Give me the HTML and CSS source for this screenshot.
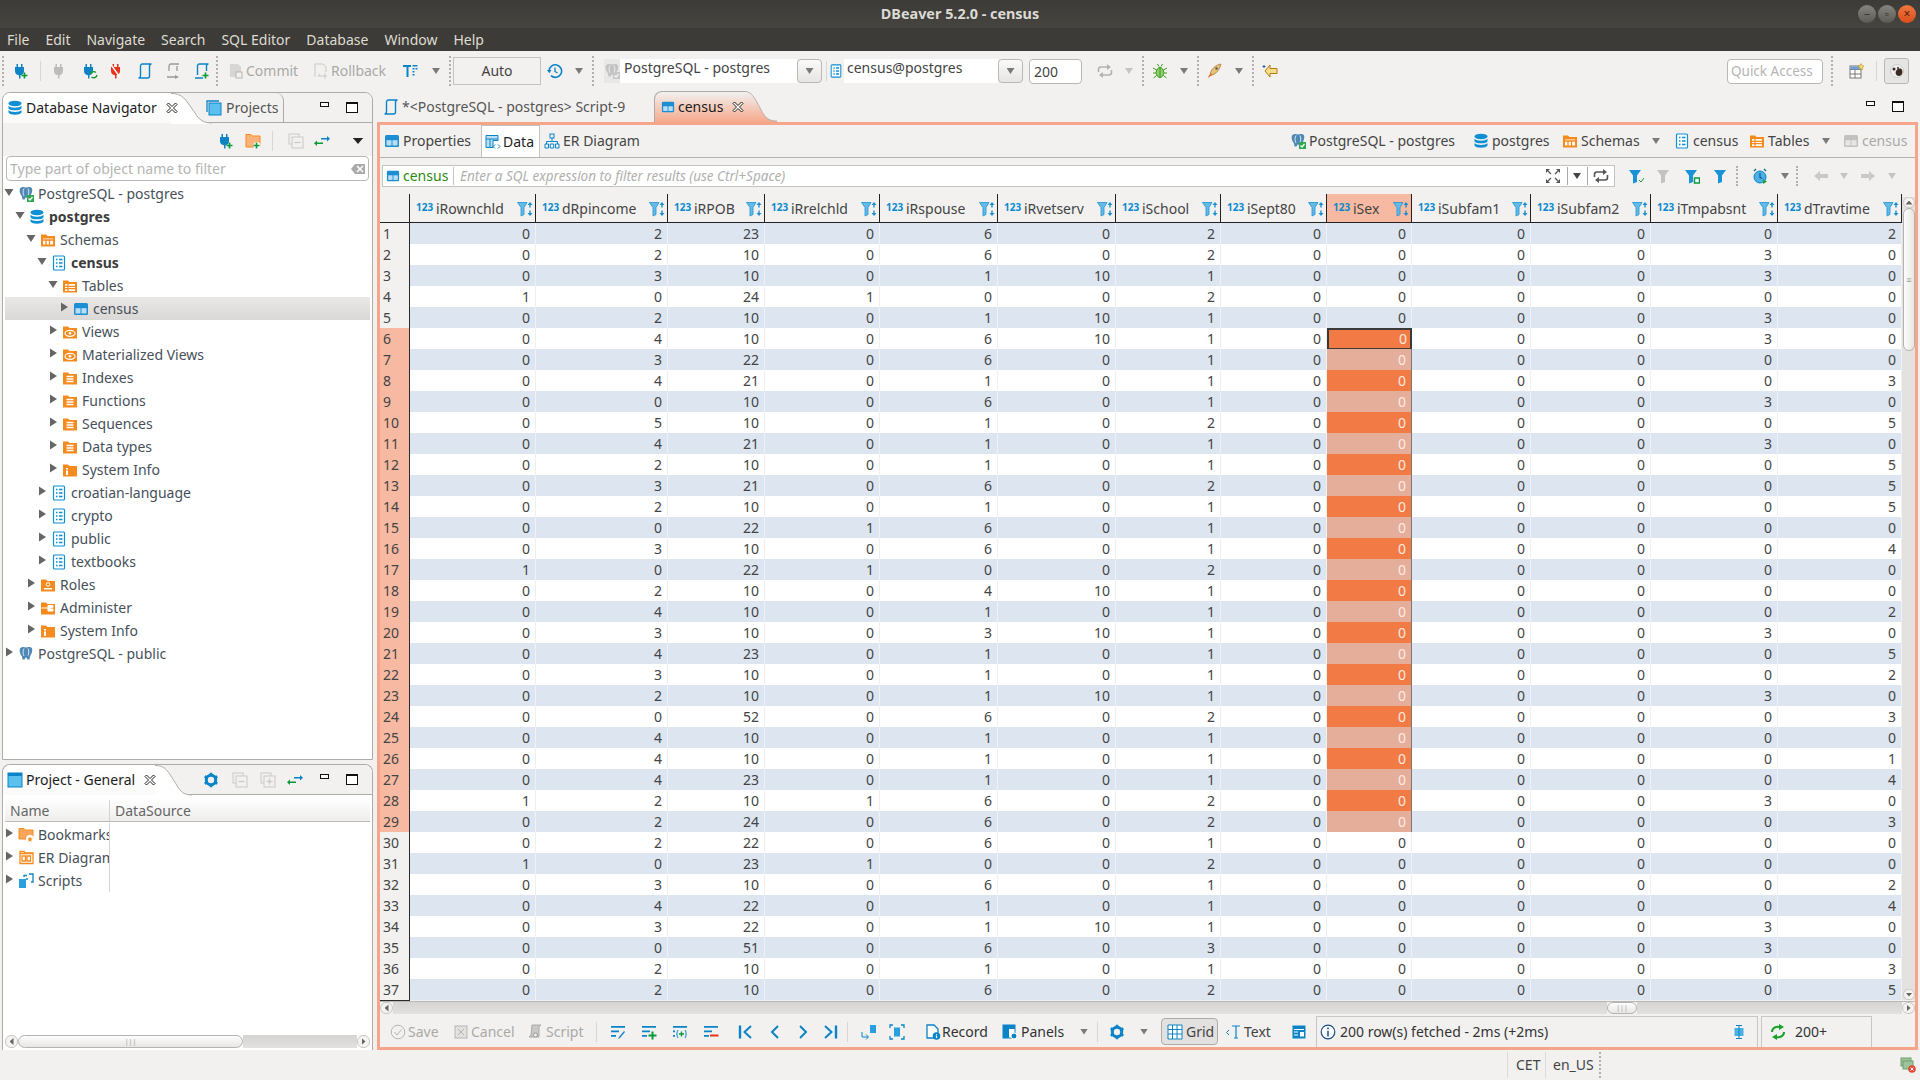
FILE: index.html
```html
<!DOCTYPE html>
<html lang="en">
<head>
<meta charset="utf-8">
<title>DBeaver 5.2.0 - census</title>
<link rel="stylesheet" href="styles.css">
</head>
<body>
<svg class="defs" aria-hidden="true">
<symbol id="plug" viewBox="0 0 16 16"><path fill="#0a84c6" d="M3.500 1H5v3h3V1h1.500v3H11v4a4.500 4.500 0 0 1-3.500 4.300V15.500h-1.500v-3.200A4.500 4.500 0 0 1 2 8V4h1.500z"/></symbol>
<symbol id="plus" viewBox="0 0 16 16"><path d="M11.500 9.500v6M8.500 12.500h6" stroke="#0a9a3a" stroke-width="1.700" fill="none"/></symbol>
<symbol id="reload" viewBox="0 0 16 16"><path d="M8.500 11a3.400 3.400 0 0 1 5.500-1.500M15 12a3.400 3.400 0 0 1-5.500 2" stroke="#1a9a2a" fill="none" stroke-width="1.400"/></symbol>
<symbol id="unplug" viewBox="0 0 16 16"><path fill="#e8321a" d="M4.500 1H6v3h3V1h1.500v3H12v4a4.500 4.500 0 0 1-3.500 4.300V15.500H7v-3.200A4.500 4.500 0 0 1 3 8V4h1.500z"/><path d="M2.500 1l10 14" stroke="#fff" stroke-width="1.400"/></symbol>
<symbol id="script" viewBox="0 0 16 16"><path d="M3.500 12.500V3.500c0-1.500.7-2.500 2-2.500h9c-1.500 0-2 1-2 2.500v9.500c0 1-.7 2-2 2h-9c1 0 2-.8 2-2.500z" fill="none" stroke="#0a84c6" stroke-width="1.400"/></symbol>
<symbol id="scriptarrow" viewBox="0 0 16 16"><path d="M4 8V3.500c0-1.500.7-2.500 2-2.500h8M12 3v5M2 14h8" fill="none" stroke="#999" stroke-width="1.300"/><path d="M10 12l4 2-4 2z" fill="#999"/></symbol>
<symbol id="scriptadd" viewBox="0 0 16 16"><path d="M3.500 12V3c0-1 .7-2 2-2h9c-1.500 0-2 1-2 2v5M1 15h8" fill="none" stroke="#0a84c6" stroke-width="1.400"/></symbol>
<symbol id="table" viewBox="0 0 16 16"><rect x="1" y="2" width="14" height="12" rx="1.500" fill="#1b8fd2"/><rect x="2.500" y="7.200" width="5" height="5.300" fill="#b9def5"/><rect x="8.500" y="7.200" width="5" height="5.300" fill="#b9def5"/></symbol>
<symbol id="schema" viewBox="0 0 16 16"><rect x="2.500" y="1" width="11" height="14" rx="1" fill="#fff" stroke="#0f8fd4" stroke-width="1.200"/><path d="M5 4.500h1.500M8 4.500h3.500M5 8h1.500M8 8h3.500M5 11.500h1.500M8 11.500h3.500" stroke="#0f8fd4" stroke-width="1.600"/></symbol>
<symbol id="db" viewBox="0 0 16 16"><g fill="#0f8fd4"><ellipse cx="8" cy="3.500" rx="6.500" ry="2.700"/><path d="M1.500 5.800c1.500 2.500 11.500 2.500 13 0v2.600c-1.500 2.500-11.500 2.500-13 0zM1.500 10c1.500 2.500 11.500 2.500 13 0v2.400c-1.500 3-11.500 3-13 0z"/></g></symbol>
<symbol id="folder" viewBox="0 0 16 16"><path d="M1 2.500h5L7.500 4H15v10.500H1z" fill="#f58b1f"/></symbol>
<symbol id="fschemas" viewBox="0 0 16 16"><use href="#folder"/><path d="M3 6.500h10v6H3z" fill="#fff"/><path d="M3 8h10M6 8v5M9.500 8v5" stroke="#f58b1f" stroke-width="1.300"/></symbol>
<symbol id="ftables" viewBox="0 0 16 16"><use href="#folder"/><path d="M3 6h10v7H3z" fill="#fff"/><path d="M3 8.300h10M3 10.700h10M6 6v7" stroke="#f58b1f" stroke-width="1.200"/></symbol>
<symbol id="fviews" viewBox="0 0 16 16"><use href="#folder"/><ellipse cx="8" cy="9.300" rx="5" ry="3" fill="none" stroke="#fff" stroke-width="1.200"/><circle cx="8" cy="9.300" r="1.300" fill="#fff"/></symbol>
<symbol id="fdb" viewBox="0 0 16 16"><use href="#folder"/><path d="M4.500 6.500h7M4.500 9h7M4.500 11.500h7" stroke="#fff" stroke-width="1.500"/></symbol>
<symbol id="finfo" viewBox="0 0 16 16"><use href="#folder"/><path d="M4 6h2v1.500H4zM4 8.500h2V13H4z" fill="#fff"/></symbol>
<symbol id="froles" viewBox="0 0 16 16"><use href="#folder"/><circle cx="8" cy="7.500" r="1.800" fill="none" stroke="#fff"/><path d="M4 12.500h8v-1.500H4z" fill="#fff"/></symbol>
<symbol id="fadmin" viewBox="0 0 16 16"><use href="#folder"/><path d="M1.500 8h7M8 5.500h5v2H10v1.500h3v2H8z" fill="#fff" stroke="#fff"/></symbol>
<symbol id="fbook" viewBox="0 0 16 16"><path d="M1 1.500h5L7.500 3H15v9H1z" fill="#f9a55a" stroke="#f58b1f"/><circle cx="12" cy="12" r="4" fill="#fff"/><path d="M12 9.500l.8 1.800 1.900.2-1.400 1.300.4 1.900-1.700-1-1.700 1 .4-1.900-1.400-1.300 1.900-.2z" fill="#f58b1f"/></symbol>
<symbol id="fer" viewBox="0 0 16 16"><path d="M2 1.500h4L7.500 3H15v10.500H2z" fill="none" stroke="#f58b1f" stroke-width="1.300"/><path d="M2 3.500h13" stroke="#f58b1f" stroke-width="1.500"/><path d="M4 6h3.500v5H4zM9 6h3.500v5H9z" fill="none" stroke="#f58b1f" stroke-width="1.300"/></symbol>
<symbol id="scripts" viewBox="0 0 16 16"><rect x="1" y="6" width="7" height="9" fill="#2a9fe0"/><path d="M6 4V2.500h3M11 1h4v8h-2M8 6h2" fill="none" stroke="#0a84c6" stroke-width="1.300"/></symbol>
<symbol id="pg" viewBox="0 0 16 16"><path d="M2 2.500C4 .5 6 .8 8 1.500c2-.9 5-1 6 1 1 3-1 6-2 8l-.5 3H9.500L8 11l-1.500 2.500h-2l-.5-3C2 8 1 5 2 2.500z" fill="#4f87b5"/><path d="M6 2.500C4.500 5 5 8 6 10M10 2.500c1 2 1 5 0 7" stroke="#fff" stroke-width=".8" fill="none"/></symbol>
<symbol id="badge" viewBox="0 0 16 16"><rect x="9" y="9" width="7" height="7" fill="#2fa84f"/><path d="M10.500 12.500l1.500 1.500 2.500-3" stroke="#fff" stroke-width="1.200" fill="none"/></symbol>
<symbol id="win" viewBox="0 0 16 16"><rect x="3" y="3" width="12" height="12" fill="#5cc0ee" stroke="#0a84c6"/><path d="M1 12V1h12" fill="none" stroke="#0a84c6" stroke-width="1.300"/></symbol>
<symbol id="winp" viewBox="0 0 16 16"><rect x="1" y="1" width="14" height="14" fill="#5cc0ee" stroke="#0a84c6"/><rect x="1" y="1" width="14" height="3" fill="#0a84c6"/></symbol>
<symbol id="fl" viewBox="0 0 16 16"><path d="M1 2h12L9 7.500v6.500l-4 1.500v-8z" fill="#1a93d6"/></symbol>
<symbol id="hfl" viewBox="0 0 16 16"><path d="M.5 1.500h9.500L7 6.500v7l-3 1.500v-8.500z" fill="#66bbe6" stroke="#1a93d6" stroke-width=".8"/><path d="M13 1l-2.500 3h1.800v2.500h1.400V4h1.800zM13 15l-2.500-3h1.800V9.500h1.400V12h1.800z" fill="#1a8fd0"/></symbol>
<symbol id="tcols" viewBox="0 0 16 16"><path d="M1 2h8v2H6.500v10h-2V4H1zM10.500 2h5v1.500h-5zM10.500 5h2v1.500h-2zM10.500 8h2v1.500h-2zM10.500 11h2v1.500h-2zM13.500 5h2v1.500h-2z" fill="#0a84c6"/></symbol>
<symbol id="hist" viewBox="0 0 16 16"><path d="M2 8a6.300 6.300 0 1 1 2 4.700" fill="none" stroke="#0a84c6" stroke-width="1.600"/><path d="M0 7h4.500L2.300 10.300z" fill="#0a84c6"/><path d="M8 4.500V8.500l2.500 1.500" fill="none" stroke="#0a84c6" stroke-width="1.300"/></symbol>
<symbol id="bug" viewBox="0 0 16 16"><ellipse cx="8" cy="9.500" rx="3.800" ry="5" fill="#8fce6a" stroke="#3a9a20"/><path d="M8 4.500v10M1 5l3.500 2M15 5l-3.500 2M1 10h3M15 10h-3M1.500 15l3-2.500M14.500 15l-3-2.500M5.500 1l1.500 2.500M10.500 1L9 3.500" stroke="#3a9a20" fill="none"/></symbol>
<symbol id="rocket" viewBox="0 0 16 16"><path d="M15 1C10 2 6 5 4.500 10l2 2C11 10 14 6 15 1z" fill="#e9c27a" stroke="#a97c32" stroke-width=".8"/><path d="M4.500 10l-3 5 5-3z" fill="#e06b2b"/><circle cx="10.500" cy="5.500" r="1.200" fill="#555"/></symbol>
<symbol id="back" viewBox="0 0 16 16"><path d="M15 5.500H8V2L3 8l5 6v-3.500h7z" fill="#f8dd8a" stroke="#b07d12"/><path d="M2 2v3M.5 3.500h3" stroke="#2a5fb0"/></symbol>
<symbol id="persp" viewBox="0 0 16 16"><rect x="1" y="3" width="11" height="12" fill="#fff" stroke="#777"/><path d="M1 6.500h11M6 6.500V15M1 11h11" stroke="#777" fill="none"/><rect x="1.500" y="3.500" width="10" height="3" fill="#6f9fd8"/><path d="M12 .5l1 2 2 .5-1.500 1.500.3 2-1.800-1-1.800 1 .3-2L9 3l2-.5z" fill="#f8d76a" stroke="#b98a12" stroke-width=".5"/></symbol>
<symbol id="beaver" viewBox="0 0 16 16"><circle cx="8" cy="8" r="6.500" fill="#eee" stroke="#ccc"/><path d="M7 8c2-3 5-3 6-1s0 6-3 6-4-3-3-5z" fill="#3a2a22"/><circle cx="5" cy="6" r="1.500" fill="#3a2a22"/><circle cx="9" cy="5" r="1" fill="#3a2a22"/></symbol>
<symbol id="close" viewBox="0 0 12 12"><path d="M2.500 1L6 4.500 9.500 1 11 2.500 7.500 6 11 9.500 9.500 11 6 7.500 2.500 11 1 9.500 4.500 6 1 2.500z" fill="#fff" stroke="#222" stroke-width="1"/></symbol>
<symbol id="gear" viewBox="0 0 16 16"><circle cx="8" cy="8" r="4.700" fill="none" stroke="#0a84c6" stroke-width="3"/><path d="M8 .8v3M8 12.200v3M1.700 4.400l2.600 1.500M11.700 10.100l2.600 1.500M1.700 11.600l2.600-1.500M11.700 5.900l2.600-1.500" stroke="#0a84c6" stroke-width="2.600"/></symbol>
<symbol id="collapse" viewBox="0 0 16 16"><rect x="1" y="1" width="10" height="10" fill="none" stroke="#c9c9c7"/><rect x="4" y="4" width="11" height="11" fill="#f2f1f0" stroke="#c9c9c7"/><path d="M6.500 9.500h6" stroke="#c9c9c7" stroke-width="1.300"/></symbol>
<symbol id="expand" viewBox="0 0 16 16"><use href="#collapse"/><path d="M9.500 6.500v6" stroke="#c9c9c7" stroke-width="1.300"/></symbol>
<symbol id="link" viewBox="0 0 16 16"><path d="M7 5h6V3l3 2.800-3 2.700V6.600H7z" fill="#0a84c6"/><path d="M9 9.400H3V7.500L0 10.300 3 13v-2h6z" fill="#0a9a3a"/></symbol>
<symbol id="folderadd" viewBox="0 0 16 16"><path d="M1 1.500h5L7.500 3H15v11H1z" fill="#fbb27a" stroke="#f58b1f"/><circle cx="12" cy="12.500" r="3.500" fill="#fff"/><use href="#plus"/></symbol>
<symbol id="edb" viewBox="0 0 16 16"><rect x="6" y="1" width="4" height="4" fill="none" stroke="#0a84c6"/><path d="M8 5v3M2.500 11V8.500h11V11" fill="none" stroke="#0a84c6"/><path d="M1 11h3.500v4H1zM6.200 11h3.500v4H6.200zM11.500 11H15v4h-3.500z" fill="none" stroke="#0a84c6"/></symbol>
<symbol id="data" viewBox="0 0 16 16"><path d="M1 1.500h12v5h-5v7H1z" fill="#b9def5" stroke="#0a84c6"/><path d="M1 5h12M5 5v8" stroke="#0a84c6"/><path d="M10 10.500l-2 2 2 2M13 10.500l2 2-2 2" fill="none" stroke="#0a84c6"/></symbol>
<symbol id="expandarrows" viewBox="0 0 16 16"><path d="M1 1h4L1 5zM15 1h-4l4 4zM1 15h4l-4-4zM15 15h-4l4-4z" fill="#555"/><path d="M3 3l3 3M13 3l-3 3M3 13l3-3M13 13l-3-3" stroke="#555" stroke-width="1.200"/></symbol>
<symbol id="refresh" viewBox="0 0 16 16"><path d="M1.500 9V6.500c0-1.500 1-2.500 2.500-2.500h8M14.500 7v2.500c0 1.500-1 2.500-2.500 2.500H4" fill="none" stroke="#555" stroke-width="1.600"/><path d="M10 1l4 3-4 3zM6 9l-4 3 4 3z" fill="#555"/></symbol>
<symbol id="clock" viewBox="0 0 16 16"><circle cx="8" cy="9" r="6" fill="#4db0e4" stroke="#0a84c6"/><path d="M8 5v4.500l2.500 1M2 3l2-2M14 3l-2-2" stroke="#0a5f99" stroke-width="1.200" fill="none"/><path d="M11 11l4 2.500-4 2.500z" fill="#1aa33a"/></symbol>
<symbol id="larrow" viewBox="0 0 16 16"><path d="M1 8l6-5v3h8v4H7v3z" fill="#c9c9c7"/></symbol>
<symbol id="rarrow" viewBox="0 0 16 16"><path d="M15 8L9 3v3H1v4h8v3z" fill="#c9c9c7"/></symbol>
<symbol id="rowedit" viewBox="0 0 16 16"><path d="M1 2h14v1.800H1zM1 6.500h8v1.800H1zM1 11h5v1.800H1z" fill="#0a84c6"/><path d="M14 7l-5 6-1 2 2-1 5-6z" fill="#0a84c6"/></symbol>
<symbol id="rowadd" viewBox="0 0 16 16"><path d="M1 2h14v1.800H1zM1 6.500h8v1.800H1zM1 11h5v1.800H1z" fill="#0a84c6"/><path d="M11.500 7.500v8M7.500 11.500h8" stroke="#0a9a3a" stroke-width="2"/></symbol>
<symbol id="rowcopy" viewBox="0 0 16 16"><path d="M1 2h14v1.800H1zM1 6.500h2v1.800H1zM1 11h2v1.800H1z" fill="#0a84c6"/><path d="M6 6C4.500 8 4.500 12 6 14M13 6c1.500 2 1.500 6 0 8" stroke="#0a84c6" fill="none"/><path d="M9.500 7.500v5M7 10h5" stroke="#0a9a3a" stroke-width="1.400"/></symbol>
<symbol id="rowdel" viewBox="0 0 16 16"><path d="M1 2h14v1.800H1zM1 6.500h8v1.800H1zM1 11h5v1.800H1z" fill="#0a84c6"/><path d="M7 11.500h8.500" stroke="#e8321a" stroke-width="2"/></symbol>
<symbol id="first" viewBox="0 0 16 16"><path d="M2 1.500v13" stroke="#0a84c6" stroke-width="2.400"/><path d="M13 2L6.500 8l6.500 6" stroke="#0a84c6" stroke-width="2" fill="none"/></symbol>
<symbol id="prev" viewBox="0 0 16 16"><path d="M11 2L5 8l6 6" stroke="#0a84c6" stroke-width="2" fill="none"/></symbol>
<symbol id="next" viewBox="0 0 16 16"><path d="M5 2l6 6-6 6" stroke="#0a84c6" stroke-width="2" fill="none"/></symbol>
<symbol id="last" viewBox="0 0 16 16"><path d="M14 1.500v13" stroke="#0a84c6" stroke-width="2.400"/><path d="M3 2l6.500 6L3 14" stroke="#0a84c6" stroke-width="2" fill="none"/></symbol>
<symbol id="tolink" viewBox="0 0 16 16"><rect x="9" y="1" width="6" height="8" fill="#2a9fe0"/><path d="M1 8v5h6M5 10.500L7.500 13 5 15.500" stroke="#0a84c6" fill="none"/></symbol>
<symbol id="focus" viewBox="0 0 16 16"><path d="M1 4V1h3M12 1h3v3M15 12v3h-3M4 15H1v-3" stroke="#0a84c6" fill="none" stroke-width="1.300"/><rect x="5" y="3.500" width="6" height="9" fill="#2a9fe0"/></symbol>
<symbol id="record" viewBox="0 0 16 16"><path d="M2 1h7l4 4v9H2z" fill="#fff" stroke="#0a84c6" stroke-width="1.300"/><circle cx="11.500" cy="12" r="3.800" fill="#0a84c6"/><path d="M11.500 10v.8M11.500 11.500V14" stroke="#fff" stroke-width="1.200"/></symbol>
<symbol id="panels" viewBox="0 0 16 16"><rect x="1" y="1" width="12" height="13" fill="#fff" stroke="#0a84c6"/><rect x="1" y="1" width="12" height="4" fill="#0a84c6"/><rect x="1" y="5" width="6" height="9" fill="#0a84c6"/><circle cx="12" cy="12" r="3" fill="#0a84c6" stroke="#fff"/></symbol>
<symbol id="grid" viewBox="0 0 16 16"><path d="M1 1h14v14H1zM1 5.500h14M1 10h14M5.500 1v14M10 1v14" fill="#fff" stroke="#0a84c6"/></symbol>
<symbol id="texti" viewBox="0 0 16 16"><path d="M7 2h8M11 2v12M9 14h4" fill="none" stroke="#0a84c6" stroke-width="1.200"/><path d="M4 6L1.500 8.500 4 11" fill="none" stroke="#0a84c6"/></symbol>
<symbol id="form" viewBox="0 0 16 16"><rect x="1.500" y="1.500" width="13" height="13" fill="#0a84c6"/><path d="M3 5.500h10M3 8h4M3 11h4" stroke="#fff"/><path d="M9 8h4v4.500H9z" fill="#fff"/></symbol>
<symbol id="info" viewBox="0 0 16 16"><circle cx="8" cy="8" r="6.800" fill="#fff" stroke="#17508a" stroke-width="1.200"/><path d="M8 3.500v1.800M8 6.700V12.500" stroke="#17508a" stroke-width="1.500"/></symbol>
<symbol id="resize" viewBox="0 0 16 16"><rect x="3.500" y="4" width="9" height="8" fill="#4db0e4"/><path d="M5 1.500h6M8 1.500v13M5 14.500h6" stroke="#0a84c6" fill="none"/></symbol>
<symbol id="cycle" viewBox="0 0 16 16"><path d="M2 8c0-4 4-6 8-5M14 8c0 4-4 6-8 5" stroke="#17a02a" stroke-width="2" fill="none"/><path d="M9 0l5 3-5 3zM7 10l-5 3 5 3z" fill="#17a02a"/></symbol>
<symbol id="save" viewBox="0 0 16 16"><circle cx="8" cy="8" r="6.800" fill="none" stroke="#b5b5b3"/><path d="M4.500 8l2.500 3 4.500-5.500" stroke="#b5b5b3" fill="none"/></symbol>
<symbol id="cancel" viewBox="0 0 16 16"><rect x="2" y="2" width="12" height="12" fill="#e2e1e0" stroke="#b5b5b3"/><path d="M5 5l6 6M11 5l-6 6" stroke="#b5b5b3"/></symbol>
<symbol id="scriptgray" viewBox="0 0 16 16"><path d="M5 1h9l-2 2v10H2l2-2z" fill="#c8c8c6" stroke="#a9a9a7"/><circle cx="8.500" cy="11" r="2" fill="#f2f1f0" stroke="#999"/></symbol>
<symbol id="commit" viewBox="0 0 16 16"><path d="M2 1h8l3 3v10H2z" fill="#d7d6d5"/><rect x="8" y="9" width="6" height="6" fill="#f2f1f0" stroke="#b5b5b3"/></symbol>
<symbol id="rollback" viewBox="0 0 16 16"><path d="M2 14V1h8l3 3v5" fill="none" stroke="#c9c9c7"/><path d="M5 13h9M12 10v6M5 13l2-2" stroke="#c9c9c7" fill="none"/></symbol>
<symbol id="notif" viewBox="0 0 16 16"><rect x="1" y="1" width="10" height="8" fill="#9dc59b" stroke="#6f9f6f"/><rect x="3" y="4" width="10" height="8" fill="#9dc59b" stroke="#6f9f6f"/><circle cx="12" cy="12" r="3.800" fill="#e0483a"/><path d="M10.500 10.500l3 3M13.500 10.500l-3 3" stroke="#fff"/></symbol>
</svg>

<header class="titlebar">
  <span class="title">DBeaver 5.2.0 - census</span>
  <div class="winbtns"><span class="wb">–</span><span class="wb">▫</span><span class="wb wb-close">×</span></div>
</header>
<nav class="menubar">
  <span>File</span><span>Edit</span><span>Navigate</span><span>Search</span><span>SQL Editor</span><span>Database</span><span>Window</span><span>Help</span>
</nav>

<div class="toolbar">
  <i class="grip"></i>
  <svg class="ic m8"><use href="#plug"/><use href="#plus"/></svg>
  <i class="sep m11"></i>
  <svg class="ic m11 dis"><use href="#plug"/></svg>
  <svg class="ic m14"><use href="#plug"/><use href="#reload"/></svg>
  <svg class="ic m10"><use href="#unplug"/></svg>
  <svg class="ic m13"><use href="#script"/></svg>
  <svg class="ic m12"><use href="#scriptarrow"/></svg>
  <svg class="ic m13"><use href="#scriptadd"/><use href="#plus"/></svg>
  <i class="grip m6"></i>
  <span class="tb off m9 b-commit"><svg class="ic"><use href="#commit"/></svg>Commit</span>
  <span class="tb off m13 b-rollback"><svg class="ic"><use href="#rollback"/></svg>Rollback</span>
  <svg class="ic m13"><use href="#tcols"/></svg>
  <i class="drop m14"></i>
  <i class="grip m9"></i>
  <span class="autobox m1">Auto</span>
  <svg class="ic m6"><use href="#hist"/></svg>
  <i class="drop m12"></i>
  <i class="grip m9"></i>
  <div class="combo combo-ds m9">
    <svg class="ic comboicon dis"><use href="#pg"/><use href="#badge"/></svg>
    <span class="comboval">PostgreSQL - postgres</span><span class="combobtn"><i class="drop"></i></span>
  </div>
  <i class="sep m4"></i>
  <svg class="ic ic14 m2"><use href="#schema"/></svg>
  <div class="combo combo-sc m1">
    <span class="comboval cv2">census@postgres</span><span class="combobtn"><i class="drop"></i></span>
  </div>
  <span class="limit m6">200</span>
  <svg class="ic m15 dis"><use href="#refresh"/></svg>
  <i class="drop m12 pale"></i>
  <i class="grip m9"></i>
  <svg class="ic m7"><use href="#bug"/></svg>
  <i class="drop m12"></i>
  <i class="grip m9"></i>
  <svg class="ic m6"><use href="#rocket"/></svg>
  <i class="drop m13"></i>
  <i class="grip m9"></i>
  <svg class="ic m7"><use href="#back"/></svg>
  <span class="quick">Quick Access</span>
  <i class="grip m8"></i>
  <svg class="ic m15"><use href="#persp"/></svg>
  <i class="sep m11"></i>
  <span class="perspbtn m7"><svg class="ic"><use href="#beaver"/></svg></span>
</div>

<main class="work">
  <div class="leftcol">
    <section class="frame nav">
      <div class="tabstrip">
        <div class="tabon tab-nav"><svg class="ic"><use href="#db"/></svg><span class="tabtxt">Database Navigator</span><svg class="x"><use href="#close"/></svg></div>
        <svg class="curve" viewBox="0 0 41 31" preserveAspectRatio="none"><path d="M0 0C12 0 14 6 24 20 28 27 33 30 41 30V31H0z" fill="#fff"/><path d="M0 .5C12 .5 14 6 24 20 28 27 33 30 41 30" fill="none" stroke="#aeaca8"/></svg>
        <div class="taboff tab-proj"><svg class="ic"><use href="#win"/></svg><span>Projects</span></div>
        <div class="minmax"><i class="mini"></i><i class="maxi"></i></div>
      </div>
      <div class="viewbar">
        <svg class="ic"><use href="#plug"/><use href="#plus"/></svg>
        <svg class="ic m11"><use href="#folderadd"/></svg>
        <i class="sep m11"></i>
        <svg class="ic m15"><use href="#collapse"/></svg>
        <svg class="ic m10"><use href="#link"/></svg>
        <i class="viewmenu m23"></i>
      </div>
      <div class="treefilter"><span>Type part of object name to filter</span><svg class="ic clr"><path d="M1 8l4-5h10v10H5z" fill="#aaa"/><path d="M7 5l6 6M13 5l-6 6" stroke="#fff" stroke-width="1.500"/></svg></div>
      <div class="tree">
        <div class="tr l0"><i class="tw open"></i><svg class="ic"><use href="#pg"/><use href="#badge"/></svg><span>PostgreSQL - postgres</span></div>
        <div class="tr l1"><i class="tw open"></i><svg class="ic"><use href="#db"/></svg><span class="bold">postgres</span></div>
        <div class="tr l2"><i class="tw open"></i><svg class="ic"><use href="#fschemas"/></svg><span>Schemas</span></div>
        <div class="tr l3"><i class="tw open"></i><svg class="ic"><use href="#schema"/></svg><span class="bold">census</span></div>
        <div class="tr l4"><i class="tw open"></i><svg class="ic"><use href="#ftables"/></svg><span>Tables</span></div>
        <div class="tr l5 trsel"><i class="tw"></i><svg class="ic"><use href="#table"/></svg><span>census</span></div>
        <div class="tr l4"><i class="tw"></i><svg class="ic"><use href="#fviews"/></svg><span>Views</span></div>
        <div class="tr l4"><i class="tw"></i><svg class="ic"><use href="#fviews"/></svg><span>Materialized Views</span></div>
        <div class="tr l4"><i class="tw"></i><svg class="ic"><use href="#fdb"/></svg><span>Indexes</span></div>
        <div class="tr l4"><i class="tw"></i><svg class="ic"><use href="#fdb"/></svg><span>Functions</span></div>
        <div class="tr l4"><i class="tw"></i><svg class="ic"><use href="#fdb"/></svg><span>Sequences</span></div>
        <div class="tr l4"><i class="tw"></i><svg class="ic"><use href="#fdb"/></svg><span>Data types</span></div>
        <div class="tr l4"><i class="tw"></i><svg class="ic"><use href="#finfo"/></svg><span>System Info</span></div>
        <div class="tr l3"><i class="tw"></i><svg class="ic"><use href="#schema"/></svg><span>croatian-language</span></div>
        <div class="tr l3"><i class="tw"></i><svg class="ic"><use href="#schema"/></svg><span>crypto</span></div>
        <div class="tr l3"><i class="tw"></i><svg class="ic"><use href="#schema"/></svg><span>public</span></div>
        <div class="tr l3"><i class="tw"></i><svg class="ic"><use href="#schema"/></svg><span>textbooks</span></div>
        <div class="tr l2"><i class="tw"></i><svg class="ic"><use href="#froles"/></svg><span>Roles</span></div>
        <div class="tr l2"><i class="tw"></i><svg class="ic"><use href="#fadmin"/></svg><span>Administer</span></div>
        <div class="tr l2"><i class="tw"></i><svg class="ic"><use href="#finfo"/></svg><span>System Info</span></div>
        <div class="tr l0"><i class="tw"></i><svg class="ic"><use href="#pg"/></svg><span>PostgreSQL - public</span></div>
      </div>
    </section>
    <section class="frame proj">
      <div class="tabstrip">
        <div class="tabon tab-project"><svg class="ic"><use href="#winp"/></svg><span class="tabtxt">Project - General</span><svg class="x"><use href="#close"/></svg></div>
        <svg class="curve curve-p" viewBox="0 0 41 31" preserveAspectRatio="none"><path d="M0 0C12 0 14 6 24 20 28 27 33 30 41 30V31H0z" fill="#fff"/><path d="M0 .5C12 .5 14 6 24 20 28 27 33 30 41 30" fill="none" stroke="#aeaca8"/></svg>
        <svg class="ic m11"><use href="#gear"/></svg>
        <svg class="ic m13"><use href="#collapse"/></svg>
        <svg class="ic m12"><use href="#expand"/></svg>
        <svg class="ic m11"><use href="#link"/></svg>
        <div class="minmax"><i class="mini"></i><i class="maxi"></i></div>
      </div>
      <div class="pthead"><span class="ptname">Name</span><span class="ptds">DataSource</span></div>
      <div class="ptbody">
        <div class="tr l0 ptr"><i class="tw"></i><svg class="ic"><use href="#fbook"/></svg><span>Bookmarks</span></div>
        <div class="tr l0 ptr"><i class="tw"></i><svg class="ic"><use href="#fer"/></svg><span>ER Diagrams</span></div>
        <div class="tr l0 ptr"><i class="tw"></i><svg class="ic"><use href="#scripts"/></svg><span>Scripts</span></div>
      </div>
      <div class="hsb hsb-p"><span class="sbtn"><i class="al"></i></span><span class="thumb thumb-p"><b>|||</b></span><span class="sfill"></span><span class="sbtn"><i class="ar"></i></span></div>
    </section>
  </div>

  <div class="rightcol">
    <div class="edtabs">
      <div class="edtab-off"><svg class="ic"><use href="#script"/></svg><span>*&lt;PostgreSQL - postgres&gt; Script-9</span></div>
      <div class="edtab-on"><svg class="ic ic14"><use href="#table"/></svg><span class="tabtxt">census</span><svg class="x"><use href="#close"/></svg></div>
      <svg class="curve curve-e" viewBox="0 0 41 31" preserveAspectRatio="none"><defs><linearGradient id="sal" x1="0" y1="0" x2="0" y2="1"><stop offset="0" stop-color="#f2f1f0"/><stop offset="1" stop-color="#f6a98c"/></linearGradient></defs><path d="M0 0C8 0 12 6 20 18 26 28 32 30 41 30V31H0z" fill="url(#sal)"/><path d="M0 .5C8 .5 12 6 20 18 26 28 32 30 41 30" fill="none" stroke="#aeaca8"/></svg>
      <div class="minmax"><i class="mini"></i><i class="maxi"></i></div>
    </div>
    <section class="panel">
      <div class="subtabs">
        <span class="st st-prop"><svg class="ic"><use href="#table"/></svg>Properties</span>
        <span class="st st-data"><svg class="ic"><use href="#data"/></svg>Data</span>
        <span class="st st-er"><svg class="ic"><use href="#edb"/></svg>ER Diagram</span>
        <span class="st bc-pg"><svg class="ic"><use href="#pg"/><use href="#badge"/></svg>PostgreSQL - postgres</span>
        <span class="st bc-db m15"><svg class="ic"><use href="#db"/></svg>postgres</span>
        <span class="st bc-sc m13"><svg class="ic"><use href="#fschemas"/></svg>Schemas</span>
        <i class="drop m13"></i>
        <span class="st bc-ce m14"><svg class="ic"><use href="#schema"/></svg>census</span>
        <span class="st bc-ta m14"><svg class="ic"><use href="#ftables"/></svg>Tables</span>
        <i class="drop m13"></i>
        <span class="st bc-tb off m13"><svg class="ic dis"><use href="#table"/></svg>census</span>
      </div>
      <div class="filterbar">
        <div class="filterbox">
          <span class="fname"><svg class="ic ic14"><use href="#table"/></svg><span>census</span></span>
          <span class="fhint">Enter a SQL expression to filter results (use Ctrl+Space)</span>
          <svg class="ic fend"><use href="#expandarrows"/></svg>
          <i class="vsep m6"></i><i class="drop m5 dark"></i><i class="vsep m6"></i>
          <svg class="ic m5"><use href="#refresh"/></svg>
        </div>
        <svg class="ic m13"><use href="#fl"/><path d="M11 12l2 2 3-4" stroke="#1aa33a" fill="none"/></svg>
        <svg class="ic m12 dis"><use href="#fl"/></svg>
        <svg class="ic m12"><use href="#fl"/><rect x="10.500" y="10" width="5" height="5" fill="#fff" stroke="#0a9a3a" stroke-width="1.500"/></svg>
        <svg class="ic m13"><use href="#fl"/></svg>
        <i class="grip m7 shortg"></i>
        <svg class="ic m13"><use href="#clock"/></svg>
        <i class="drop m13"></i>
        <i class="grip m7 shortg"></i>
        <svg class="ic m14"><use href="#larrow"/></svg>
        <i class="drop m11 pale"></i>
        <svg class="ic m12"><use href="#rarrow"/></svg>
        <i class="drop m12 pale"></i>
      </div>
      <div class="gridwrap">
        <div class="grid">
          <div class="ghead">
            <span class="corner"></span>
            <span class="hc"><em>123</em><span class="hn">iRownchld</span><svg class="hic"><use href="#hfl"/></svg></span>
            <span class="hc"><em>123</em><span class="hn">dRpincome</span><svg class="hic"><use href="#hfl"/></svg></span>
            <span class="hc"><em>123</em><span class="hn">iRPOB</span><svg class="hic"><use href="#hfl"/></svg></span>
            <span class="hc"><em>123</em><span class="hn">iRrelchld</span><svg class="hic"><use href="#hfl"/></svg></span>
            <span class="hc"><em>123</em><span class="hn">iRspouse</span><svg class="hic"><use href="#hfl"/></svg></span>
            <span class="hc"><em>123</em><span class="hn">iRvetserv</span><svg class="hic"><use href="#hfl"/></svg></span>
            <span class="hc"><em>123</em><span class="hn">iSchool</span><svg class="hic"><use href="#hfl"/></svg></span>
            <span class="hc"><em>123</em><span class="hn">iSept80</span><svg class="hic"><use href="#hfl"/></svg></span>
            <span class="hc hsel"><em>123</em><span class="hn">iSex</span><svg class="hic"><use href="#hfl"/></svg></span>
            <span class="hc"><em>123</em><span class="hn">iSubfam1</span><svg class="hic"><use href="#hfl"/></svg></span>
            <span class="hc"><em>123</em><span class="hn">iSubfam2</span><svg class="hic"><use href="#hfl"/></svg></span>
            <span class="hc"><em>123</em><span class="hn">iTmpabsnt</span><svg class="hic"><use href="#hfl"/></svg></span>
            <span class="hc"><em>123</em><span class="hn">dTravtime</span><svg class="hic"><use href="#hfl"/></svg></span>
          </div>
          <div class="rows">
<div class="row"><b>1</b><s>0</s><s>2</s><s>23</s><s>0</s><s>6</s><s>0</s><s>2</s><s>0</s><s>0</s><s>0</s><s>0</s><s>0</s><s>2</s></div>
<div class="row"><b>2</b><s>0</s><s>2</s><s>10</s><s>0</s><s>6</s><s>0</s><s>2</s><s>0</s><s>0</s><s>0</s><s>0</s><s>3</s><s>0</s></div>
<div class="row"><b>3</b><s>0</s><s>3</s><s>10</s><s>0</s><s>1</s><s>10</s><s>1</s><s>0</s><s>0</s><s>0</s><s>0</s><s>3</s><s>0</s></div>
<div class="row"><b>4</b><s>1</s><s>0</s><s>24</s><s>1</s><s>0</s><s>0</s><s>2</s><s>0</s><s>0</s><s>0</s><s>0</s><s>0</s><s>0</s></div>
<div class="row"><b>5</b><s>0</s><s>2</s><s>10</s><s>0</s><s>1</s><s>10</s><s>1</s><s>0</s><s>0</s><s>0</s><s>0</s><s>3</s><s>0</s></div>
<div class="row sel cur"><b>6</b><s>0</s><s>4</s><s>10</s><s>0</s><s>6</s><s>10</s><s>1</s><s>0</s><s>0</s><s>0</s><s>0</s><s>3</s><s>0</s></div>
<div class="row sel"><b>7</b><s>0</s><s>3</s><s>22</s><s>0</s><s>6</s><s>0</s><s>1</s><s>0</s><s>0</s><s>0</s><s>0</s><s>0</s><s>0</s></div>
<div class="row sel"><b>8</b><s>0</s><s>4</s><s>21</s><s>0</s><s>1</s><s>0</s><s>1</s><s>0</s><s>0</s><s>0</s><s>0</s><s>0</s><s>3</s></div>
<div class="row sel"><b>9</b><s>0</s><s>0</s><s>10</s><s>0</s><s>6</s><s>0</s><s>1</s><s>0</s><s>0</s><s>0</s><s>0</s><s>3</s><s>0</s></div>
<div class="row sel"><b>10</b><s>0</s><s>5</s><s>10</s><s>0</s><s>1</s><s>0</s><s>2</s><s>0</s><s>0</s><s>0</s><s>0</s><s>0</s><s>5</s></div>
<div class="row sel"><b>11</b><s>0</s><s>4</s><s>21</s><s>0</s><s>1</s><s>0</s><s>1</s><s>0</s><s>0</s><s>0</s><s>0</s><s>3</s><s>0</s></div>
<div class="row sel"><b>12</b><s>0</s><s>2</s><s>10</s><s>0</s><s>1</s><s>0</s><s>1</s><s>0</s><s>0</s><s>0</s><s>0</s><s>0</s><s>5</s></div>
<div class="row sel"><b>13</b><s>0</s><s>3</s><s>21</s><s>0</s><s>6</s><s>0</s><s>2</s><s>0</s><s>0</s><s>0</s><s>0</s><s>0</s><s>5</s></div>
<div class="row sel"><b>14</b><s>0</s><s>2</s><s>10</s><s>0</s><s>1</s><s>0</s><s>1</s><s>0</s><s>0</s><s>0</s><s>0</s><s>0</s><s>5</s></div>
<div class="row sel"><b>15</b><s>0</s><s>0</s><s>22</s><s>1</s><s>6</s><s>0</s><s>1</s><s>0</s><s>0</s><s>0</s><s>0</s><s>0</s><s>0</s></div>
<div class="row sel"><b>16</b><s>0</s><s>3</s><s>10</s><s>0</s><s>6</s><s>0</s><s>1</s><s>0</s><s>0</s><s>0</s><s>0</s><s>0</s><s>4</s></div>
<div class="row sel"><b>17</b><s>1</s><s>0</s><s>22</s><s>1</s><s>0</s><s>0</s><s>2</s><s>0</s><s>0</s><s>0</s><s>0</s><s>0</s><s>0</s></div>
<div class="row sel"><b>18</b><s>0</s><s>2</s><s>10</s><s>0</s><s>4</s><s>10</s><s>1</s><s>0</s><s>0</s><s>0</s><s>0</s><s>0</s><s>0</s></div>
<div class="row sel"><b>19</b><s>0</s><s>4</s><s>10</s><s>0</s><s>1</s><s>0</s><s>1</s><s>0</s><s>0</s><s>0</s><s>0</s><s>0</s><s>2</s></div>
<div class="row sel"><b>20</b><s>0</s><s>3</s><s>10</s><s>0</s><s>3</s><s>10</s><s>1</s><s>0</s><s>0</s><s>0</s><s>0</s><s>3</s><s>0</s></div>
<div class="row sel"><b>21</b><s>0</s><s>4</s><s>23</s><s>0</s><s>1</s><s>0</s><s>1</s><s>0</s><s>0</s><s>0</s><s>0</s><s>0</s><s>5</s></div>
<div class="row sel"><b>22</b><s>0</s><s>3</s><s>10</s><s>0</s><s>1</s><s>0</s><s>1</s><s>0</s><s>0</s><s>0</s><s>0</s><s>0</s><s>2</s></div>
<div class="row sel"><b>23</b><s>0</s><s>2</s><s>10</s><s>0</s><s>1</s><s>10</s><s>1</s><s>0</s><s>0</s><s>0</s><s>0</s><s>3</s><s>0</s></div>
<div class="row sel"><b>24</b><s>0</s><s>0</s><s>52</s><s>0</s><s>6</s><s>0</s><s>2</s><s>0</s><s>0</s><s>0</s><s>0</s><s>0</s><s>3</s></div>
<div class="row sel"><b>25</b><s>0</s><s>4</s><s>10</s><s>0</s><s>1</s><s>0</s><s>1</s><s>0</s><s>0</s><s>0</s><s>0</s><s>0</s><s>0</s></div>
<div class="row sel"><b>26</b><s>0</s><s>4</s><s>10</s><s>0</s><s>1</s><s>0</s><s>1</s><s>0</s><s>0</s><s>0</s><s>0</s><s>0</s><s>1</s></div>
<div class="row sel"><b>27</b><s>0</s><s>4</s><s>23</s><s>0</s><s>1</s><s>0</s><s>1</s><s>0</s><s>0</s><s>0</s><s>0</s><s>0</s><s>4</s></div>
<div class="row sel"><b>28</b><s>1</s><s>2</s><s>10</s><s>1</s><s>6</s><s>0</s><s>2</s><s>0</s><s>0</s><s>0</s><s>0</s><s>3</s><s>0</s></div>
<div class="row sel"><b>29</b><s>0</s><s>2</s><s>24</s><s>0</s><s>6</s><s>0</s><s>2</s><s>0</s><s>0</s><s>0</s><s>0</s><s>0</s><s>3</s></div>
<div class="row"><b>30</b><s>0</s><s>2</s><s>22</s><s>0</s><s>6</s><s>0</s><s>1</s><s>0</s><s>0</s><s>0</s><s>0</s><s>0</s><s>0</s></div>
<div class="row"><b>31</b><s>1</s><s>0</s><s>23</s><s>1</s><s>0</s><s>0</s><s>2</s><s>0</s><s>0</s><s>0</s><s>0</s><s>0</s><s>0</s></div>
<div class="row"><b>32</b><s>0</s><s>3</s><s>10</s><s>0</s><s>6</s><s>0</s><s>1</s><s>0</s><s>0</s><s>0</s><s>0</s><s>0</s><s>2</s></div>
<div class="row"><b>33</b><s>0</s><s>4</s><s>22</s><s>0</s><s>1</s><s>0</s><s>1</s><s>0</s><s>0</s><s>0</s><s>0</s><s>0</s><s>4</s></div>
<div class="row"><b>34</b><s>0</s><s>3</s><s>22</s><s>0</s><s>1</s><s>10</s><s>1</s><s>0</s><s>0</s><s>0</s><s>0</s><s>3</s><s>0</s></div>
<div class="row"><b>35</b><s>0</s><s>0</s><s>51</s><s>0</s><s>6</s><s>0</s><s>3</s><s>0</s><s>0</s><s>0</s><s>0</s><s>3</s><s>0</s></div>
<div class="row"><b>36</b><s>0</s><s>2</s><s>10</s><s>0</s><s>1</s><s>0</s><s>1</s><s>0</s><s>0</s><s>0</s><s>0</s><s>0</s><s>3</s></div>
<div class="row"><b>37</b><s>0</s><s>2</s><s>10</s><s>0</s><s>6</s><s>0</s><s>2</s><s>0</s><s>0</s><s>0</s><s>0</s><s>0</s><s>5</s></div>
          </div>
        </div>
        <div class="vsb"><span class="vbtn"><i class="au"></i></span><span class="vthumb"><b>≡</b></span><span class="vfill"></span><span class="vbtn"><i class="ad"></i></span></div>
      </div>
      <div class="hsb hsb-g"><span class="sbtn"><i class="al"></i></span><span class="sfill gf1"></span><span class="thumb thumb-g"><b>|||</b></span><span class="sfill"></span><span class="sbtn"><i class="ar"></i></span></div>
      <div class="bottombar">
        <span class="tb off m10 b-save"><svg class="ic"><use href="#save"/></svg>Save</span>
        <span class="tb off m14 b-cancel"><svg class="ic"><use href="#cancel"/></svg>Cancel</span>
        <span class="tb off m13 b-script"><svg class="ic"><use href="#scriptgray"/></svg>Script</span>
        <i class="sep m11"></i>
        <svg class="ic m13"><use href="#rowedit"/></svg>
        <svg class="ic m15"><use href="#rowadd"/></svg>
        <svg class="ic m15"><use href="#rowcopy"/></svg>
        <svg class="ic m15"><use href="#rowdel"/></svg>
        <svg class="ic m19"><use href="#first"/></svg>
        <svg class="ic m13"><use href="#prev"/></svg>
        <svg class="ic m12"><use href="#next"/></svg>
        <svg class="ic m11"><use href="#last"/></svg>
        <i class="sep m9"></i>
        <svg class="ic m13"><use href="#tolink"/></svg>
        <svg class="ic m12"><use href="#focus"/></svg>
        <span class="tb m20 b-record"><svg class="ic"><use href="#record"/></svg>Record</span>
        <span class="tb m12 b-panels"><svg class="ic"><use href="#panels"/></svg>Panels</span>
        <i class="drop m15"></i>
        <i class="sep m9"></i>
        <svg class="ic m11"><use href="#gear"/></svg>
        <i class="drop m15"></i>
        <span class="tb m13 b-grid"><svg class="ic"><use href="#grid"/></svg>Grid</span>
        <span class="tb m7 b-text"><svg class="ic"><use href="#texti"/></svg>Text</span>
        <svg class="ic m18"><use href="#form"/></svg>
        <div class="statusbox m9"><svg class="ic"><use href="#info"/></svg><span>200 row(s) fetched - 2ms (+2ms)</span><svg class="ic sb-end"><use href="#resize"/></svg></div>
        <div class="countbox m3"><svg class="ic"><use href="#cycle"/></svg><span>200+</span></div>
      </div>
    </section>
  </div>
</main>

<footer class="statusline">
  <span class="sl-cet">CET</span><span class="sl-loc">en_US</span><svg class="ic sl-ic"><use href="#notif"/></svg>
</footer>
</body>
</html>
```
FILE: styles.css
```css
* { box-sizing: border-box; }
html, body { margin: 0; padding: 0; }
body {
  width: 1920px; height: 1080px; overflow: hidden;
  background: #f2f1f0; color: #444;
  font: 14px/20px "Noto Sans", "Liberation Sans", sans-serif;
}
.defs { width: 0; height: 0; position: absolute; }
i, em, s, b { font-style: normal; text-decoration: none; font-weight: normal; }

/* margins used by toolbar items */
.m1{margin-left:1px}.m2{margin-left:2px}.m3{margin-left:3px}.m4{margin-left:4px}.m5{margin-left:5px}.m6{margin-left:6px}.m7{margin-left:7px}.m8{margin-left:8px}.m9{margin-left:9px}.m10{margin-left:10px}.m11{margin-left:11px}.m12{margin-left:12px}.m13{margin-left:13px}.m14{margin-left:14px}.m15{margin-left:15px}.m18{margin-left:18px}.m19{margin-left:19px}.m20{margin-left:20px}.m21{margin-left:21px}.m23{margin-left:23px}

.ic { width: 16px; height: 16px; flex: none; display: block; }
.ic14 { width: 14px; }
.dis { filter: grayscale(1); opacity: .4; }
.grip { flex: none; width: 3px; height: 30px; border-left: 2px dotted #b2b0ac; }
.shortg { height: 20px; }
.sep { flex: none; width: 1px; height: 20px; background: #d8d7d5; }
.drop { flex: none; width: 8px; height: 6px; background: #7a7a78; clip-path: polygon(0 0, 100% 0, 50% 100%); }
.drop.pale { background: #c4c4c2; }
.drop.dark { background: #444; }

/* title and menu */
.titlebar {
  height: 28px; display: flex; align-items: center; justify-content: center;
  background: linear-gradient(#3c3b37, #45443f); position: relative;
}
.title { color: #dcdad5; font-weight: 700; font-size: 14.400px; }
.winbtns { position: absolute; right: 4px; top: 5px; display: flex; gap: 2px; }
.wb {
  width: 18px; height: 18px; border-radius: 50%; display: flex; align-items: center; justify-content: center;
  background: linear-gradient(#85847f, #5c5b56); color: #3a3935; font-size: 12px; line-height: 18px;
}
.wb-close { background: linear-gradient(#f0763f, #d94e1c); color: #5a2008; }
.menubar {
  height: 23px; display: flex; align-items: center; gap: 16px; padding-left: 7px;
  background: #3c3b37; color: #dfdbd2;
}

/* main toolbar */
.toolbar { height: 40px; display: flex; align-items: center; padding-left: 2px; }
.tb { display: flex; align-items: center; gap: 2px; flex: none; white-space: nowrap; }
.off { color: #a9a9a7; }
.b-commit { width: 72px; }
.b-rollback { width: 76px; }
.autobox {
  flex: none; width: 88px; height: 28px; border: 1px solid #c5c3bf; display: flex; align-items: center; justify-content: center;
}
.combo { flex: none; height: 24px; display: flex; align-items: stretch; }
.combo-ds { width: 218px; }
.combo-sc { width: 179px; }
.comboicon { align-self: center; background: #dcdbd9; width: 16px; height: 24px; }
.comboval { flex: 1; background: #fff; padding-left: 4px; line-height: 18px; white-space: nowrap; overflow: hidden; }
.cv2 { padding-left: 3px; }
.combobtn {
  flex: none; width: 25px; border: 1px solid #bab8b4; border-radius: 4px;
  background: linear-gradient(#fafafa, #e6e5e3); display: flex; align-items: center; justify-content: center;
}
.limit {
  flex: none; width: 53px; height: 25px; background: #fff; border: 1px solid #bab8b4; border-radius: 4px;
  padding-left: 4px; line-height: 24px;
}
.quick {
  flex: none; margin-left: auto; width: 96px; height: 25px; background: #fff; border: 1px solid #bab8b4; border-radius: 4px;
  color: #b5b5b3; padding-left: 3px; line-height: 23px; white-space: nowrap; overflow: hidden; font-size: 13.500px;
}
.perspbtn {
  flex: none; width: 25px; height: 26px; margin-right: 11px; border: 1px solid #bab8b4; border-radius: 3px;
  background: #e6e5e3; display: flex; align-items: center; justify-content: center;
}

/* layout */
.work { height: 959px; display: flex; padding: 0 2px; gap: 4px; }
.leftcol { flex: none; width: 371px; display: flex; flex-direction: column; gap: 4px; padding-top: 1px; }
.rightcol { flex: 1; min-width: 0; display: flex; flex-direction: column; }
.frame {
  border: 1px solid #aeaca8; border-bottom: 0; border-radius: 8px 8px 0 0; display: flex; flex-direction: column; background: #fff;
}
.nav { height: 668px; border-bottom: 1px solid #aeaca8; border-radius: 8px 8px 0 0; }
.proj { height: 286px; background: #fff; }

/* folder tabs */
.tabstrip { flex: none; height: 30px; display: flex; align-items: center; background: #f2f1f0; border-bottom: 1px solid #aeaca8; border-radius: 8px 8px 0 0; position: relative; }
.tabon { flex: none; height: 30px; display: flex; align-items: center; background: linear-gradient(#fff, #fafaf9); border-radius: 8px 0 0 0; padding-left: 4px; color: #1c1c1c; }
.tab-nav { width: 168px; }
.tab-project { width: 152px; }
.tabtxt { margin-left: 3px; white-space: nowrap; }
.x { width: 12px; height: 12px; margin-left: 9px; flex: none; position: relative; z-index: 1; }
.curve { flex: none; width: 41px; height: 31px; align-self: flex-start; }
.curve-p { width: 37px; }
.taboff { flex: none; display: flex; align-items: center; gap: 4px; margin-left: -6px; width: 78px; height: 30px; border-right: 1px solid #aeaca8; border-top-right-radius: 8px; color: #555; white-space: nowrap; }
.minmax { margin-left: auto; display: flex; align-items: center; gap: 17px; padding-right: 14px; flex: none; }
.mini { width: 9px; height: 5px; border: 1px solid #111; background: #fff; margin-bottom: 6px; }
.maxi { width: 12px; height: 11px; border: 1px solid #111; border-top-width: 2px; background: #fff; }

/* navigator */
.viewbar { flex: none; height: 33px; display: flex; align-items: center; justify-content: flex-end; padding: 3px 9px 0 0; background: #f2f1f0; }
.viewmenu { width: 10px; height: 6px; flex: none; border-top: 1px solid #222; background: #222; clip-path: polygon(0 0, 100% 0, 50% 100%); }
.treefilter {
  flex: none; height: 25px; margin: 0 3px 1px; border: 1px solid #bab8b4; border-radius: 4px; background: #fff; color: #b5b5b3;
  display: flex; align-items: center; padding-left: 3px;
}
.clr { margin-left: auto; margin-right: 2px; }
.tree { flex: 1; background: #fff; }
.tr { height: 23px; display: flex; align-items: center; gap: 4px; white-space: nowrap; color: #47505a; }
.l0 { padding-left: 1px; }
.l1 { padding-left: 12px; }
.l2 { padding-left: 23px; }
.l3 { padding-left: 34px; }
.l4 { padding-left: 45px; }
.l5 { padding-left: 56px; }
.trsel { background: linear-gradient(#e9e8e6, #d9d8d6); margin: 0 2px; padding-left: 54px; }
.bold { font-weight: 700; color: #3c3c3c; }
.tw { flex: none; width: 10px; height: 10px; display: flex; background: #666; clip-path: polygon(20% 5%, 90% 50%, 20% 95%); margin-top: -3px; }
.tw.open { clip-path: polygon(5% 20%, 95% 20%, 50% 90%); }

/* project */
.pthead {
  flex: none; height: 24px; margin: 3px 2px 0; padding-top: 2px; display: flex; align-items: center;
  background: linear-gradient(#fff, #efeeed); border-bottom: 1px solid #bcbab6; color: #666;
}
.ptname { width: 105px; padding-left: 5px; border-right: 1px solid #d5d4d2; height: 100%; line-height: 21px; }
.ptds { padding-left: 5px; }
.ptbody { flex: 1; padding-top: 1px; }
.ptr { width: 107px; overflow: hidden; border-right: 1px solid #d5d4d2; }
.hsb { flex: none; display: flex; height: 13px; align-items: stretch; }
.hsb-p { margin: 0 2px 2px; }
.hsb-g { height: 13px; margin: 1px 0 0; border-top: 1px solid #b9b7b3; }
.sbtn { flex: none; width: 13px; background: #f4f3f2; border: 1px solid #c9c7c4; border-radius: 6px; display: flex; align-items: center; justify-content: center; }
.sfill { flex: 1; background: linear-gradient(#d5d4d2, #e2e1df); }
.gf1 { flex: none; width: 1214px; }
.thumb { flex: none; background: linear-gradient(#fdfdfd, #e7e6e4); border: 1px solid #b5b3af; border-radius: 7px; display: flex; align-items: center; justify-content: center; font-size: 7px; color: #999; line-height: 10px; }
.thumb-p { width: 225px; }
.thumb-g { width: 30px; }
.al, .ar, .au, .ad { display: block; background: #666; }
.al { width: 4px; height: 7px; clip-path: polygon(100% 0, 0 50%, 100% 100%); }
.ar { width: 4px; height: 7px; clip-path: polygon(0 0, 100% 50%, 0 100%); }
.au { width: 7px; height: 4px; clip-path: polygon(50% 0, 100% 100%, 0 100%); }
.ad { width: 7px; height: 4px; clip-path: polygon(0 0, 100% 0, 50% 100%); }

/* editor tabs */
.edtabs { flex: none; height: 31px; display: flex; align-items: center; }
.edtab-off { flex: none; width: 277px; display: flex; align-items: center; gap: 3px; padding-left: 6px; color: #555; white-space: nowrap; }
.edtab-on {
  flex: none; width: 91px; height: 31px; display: flex; align-items: center; padding-left: 6px; color: #1c1c1c;
  background: linear-gradient(#f2f1f0, #f6a98c); border-radius: 8px 0 0 0; border: 1px solid #aeaca8; border-width: 1px 0 0 1px;
}
.curve-e { width: 32px; }

/* results panel */
.panel { flex: 1; border: 3px solid #f5a58a; min-height: 0; display: flex; flex-direction: column; background: #f2f1f0; width: 1541px; }
.subtabs { flex: none; height: 33px; display: flex; align-items: center; border-bottom: 1px solid #b5b3ae; padding-right: 10px; }
.st { flex: none; display: flex; align-items: center; gap: 3px; white-space: nowrap; }
.st-prop { width: 96px; padding-left: 4px; }
.st-data { width: 59px; height: 32px; margin-left: 5px; padding-left: 3px; gap: 2px; background: #fff; border: 1px solid #c5c3bf; border-bottom: 0; color: #222; }
.st-er { width: 97px; margin-left: 4px; }
.bc-pg { width: 168px; margin-left: auto; }
.bc-db { width: 76px; }
.bc-sc { width: 77px; }
.bc-ce { width: 61px; }
.bc-ta { width: 60px; }
.bc-tb { width: 62px; }

.filterbar { flex: none; height: 22px; margin: 7px 0; display: flex; align-items: center; }
.filterbox {
  flex: none; width: 1233px; height: 22px; margin-left: 2px; background: #fff; border: 1px solid #c5c3bf; display: flex; align-items: center; padding-left: 3px;
}
.fname { flex: none; width: 68px; height: 18px; display: flex; align-items: center; gap: 3px; color: #2a8a10; border-right: 1px solid #c5c3bf; }
.fhint { margin-left: 6px; font-style: italic; color: #b0b0ae; font-size: 13.500px; white-space: nowrap; }
.fend { margin-left: auto; }
.vsep { flex: none; width: 1px; height: 18px; background: #aaa; }
.filterbox > svg:last-child { margin-right: 5px; }

/* data grid */
.gridwrap { flex: none; height: 806px; display: flex; }
.grid {
  flex: none; width: 1522px;
  --cols: 30px 126px 132px 97px 115px 118px 118px 105px 106px 85px 119px 120px 127px 124px;
}
.ghead { height: 29px; display: grid; grid-template-columns: var(--cols); border-bottom: 1px solid #222; }
.corner { border-right: 1px solid #222; }
.hc { display: flex; align-items: center; border-right: 1px solid #222; padding: 2px 2px 0 6px; min-width: 0; }
.hc em { flex: none; width: 20px; color: #0a8ad0; font-size: 10px; font-weight: 700; line-height: 12px; margin-top: -4px; }
.hn { flex: 1; min-width: 0; white-space: nowrap; overflow: hidden; color: #444; }
.hic { flex: none; width: 16px; height: 16px; }
.hsel { background: #f7b9a1; }
.row { height: 21px; display: grid; grid-template-columns: var(--cols); }
.row > b { display: block; padding-left: 3px; background: #f2f1f0; box-shadow: inset -1px -1px 0 #2a2a2a; line-height: 21px; color: #444; }
.row s { text-align: right; padding-right: 5px; border-right: 1px solid #f0f0ef; border-bottom: 1px solid #f0f0ef; line-height: 21px; background: #fff; color: #444; }
.rows .row:nth-child(odd) s { background: #dce5f0; border-color: #eef1f5; }
.row.sel > b { background: #f7b9a1; }
.rows .row.sel:nth-child(even) s:nth-child(10) { background: #f27a45; color: #fdebe3; border-color: #7d7570; border-width: 0 1px 1px 0; }
.rows .row.sel:nth-child(odd) s:nth-child(10) { background: #e4ae9b; color: #fdebe3; border-color: #7d7570; border-width: 0 1px 1px 0; }
.rows .row.sel.cur:nth-child(even) s:nth-child(10) { border: 2px solid #3a3a3a; padding-right: 3px; line-height: 17px; }
.vsb { flex: none; width: 13px; display: flex; flex-direction: column; background: #e3e2e0; margin-top: 3px; padding-left: 1px; }
.vbtn { flex: none; height: 11px; background: #f4f3f2; border: 1px solid #c9c7c4; border-radius: 6px; display: flex; align-items: center; justify-content: center; }
.vthumb { flex: none; height: 143px; background: linear-gradient(90deg, #fdfdfd, #e7e6e4); border: 1px solid #b5b3af; border-radius: 7px; display: flex; align-items: center; justify-content: center; font-size: 9px; color: #999; }
.vfill { flex: 1; }

/* bottom toolbar */
.bottombar { flex: none; height: 33px; display: flex; align-items: center; padding-top: 2px; }
.b-save { width: 49px; }
.b-cancel { width: 61px; }
.b-script { width: 58px; gap: 3px; }
.b-record { width: 65px; gap: 1px; color: #333; }
.b-panels { width: 63px; gap: 3px; color: #333; }
.b-grid { width: 57px; height: 27px; gap: 3px; padding-left: 5px; border: 1px solid #aeaca8; border-radius: 4px; background: #e2e1df; }
.b-text { width: 48px; gap: 3px; }
.statusbox { flex: none; width: 442px; height: 31px; border: 1px solid #c9c7c4; border-bottom: 0; display: flex; align-items: center; gap: 4px; padding-left: 3px; color: #333; white-space: nowrap; }
.sb-end { margin-left: auto; margin-right: 10px; }
.countbox { flex: none; width: 111px; height: 31px; border: 1px solid #c9c7c4; border-bottom: 0; display: flex; align-items: center; gap: 9px; padding-left: 8px; color: #333; }

/* status line */
.statusline { height: 30px; display: flex; align-items: center; padding-left: 1507px; }
.sl-cet { flex: none; width: 39px; height: 26px; padding-left: 8px; border-left: 1px solid #dcdbd9; border-right: 1px solid #dcdbd9; line-height: 26px; }
.sl-loc { flex: none; width: 55px; height: 26px; padding-left: 7px; border-right: 2px dotted #b2b0ac; line-height: 26px; }
.sl-ic { margin-left: 299px; }
```
